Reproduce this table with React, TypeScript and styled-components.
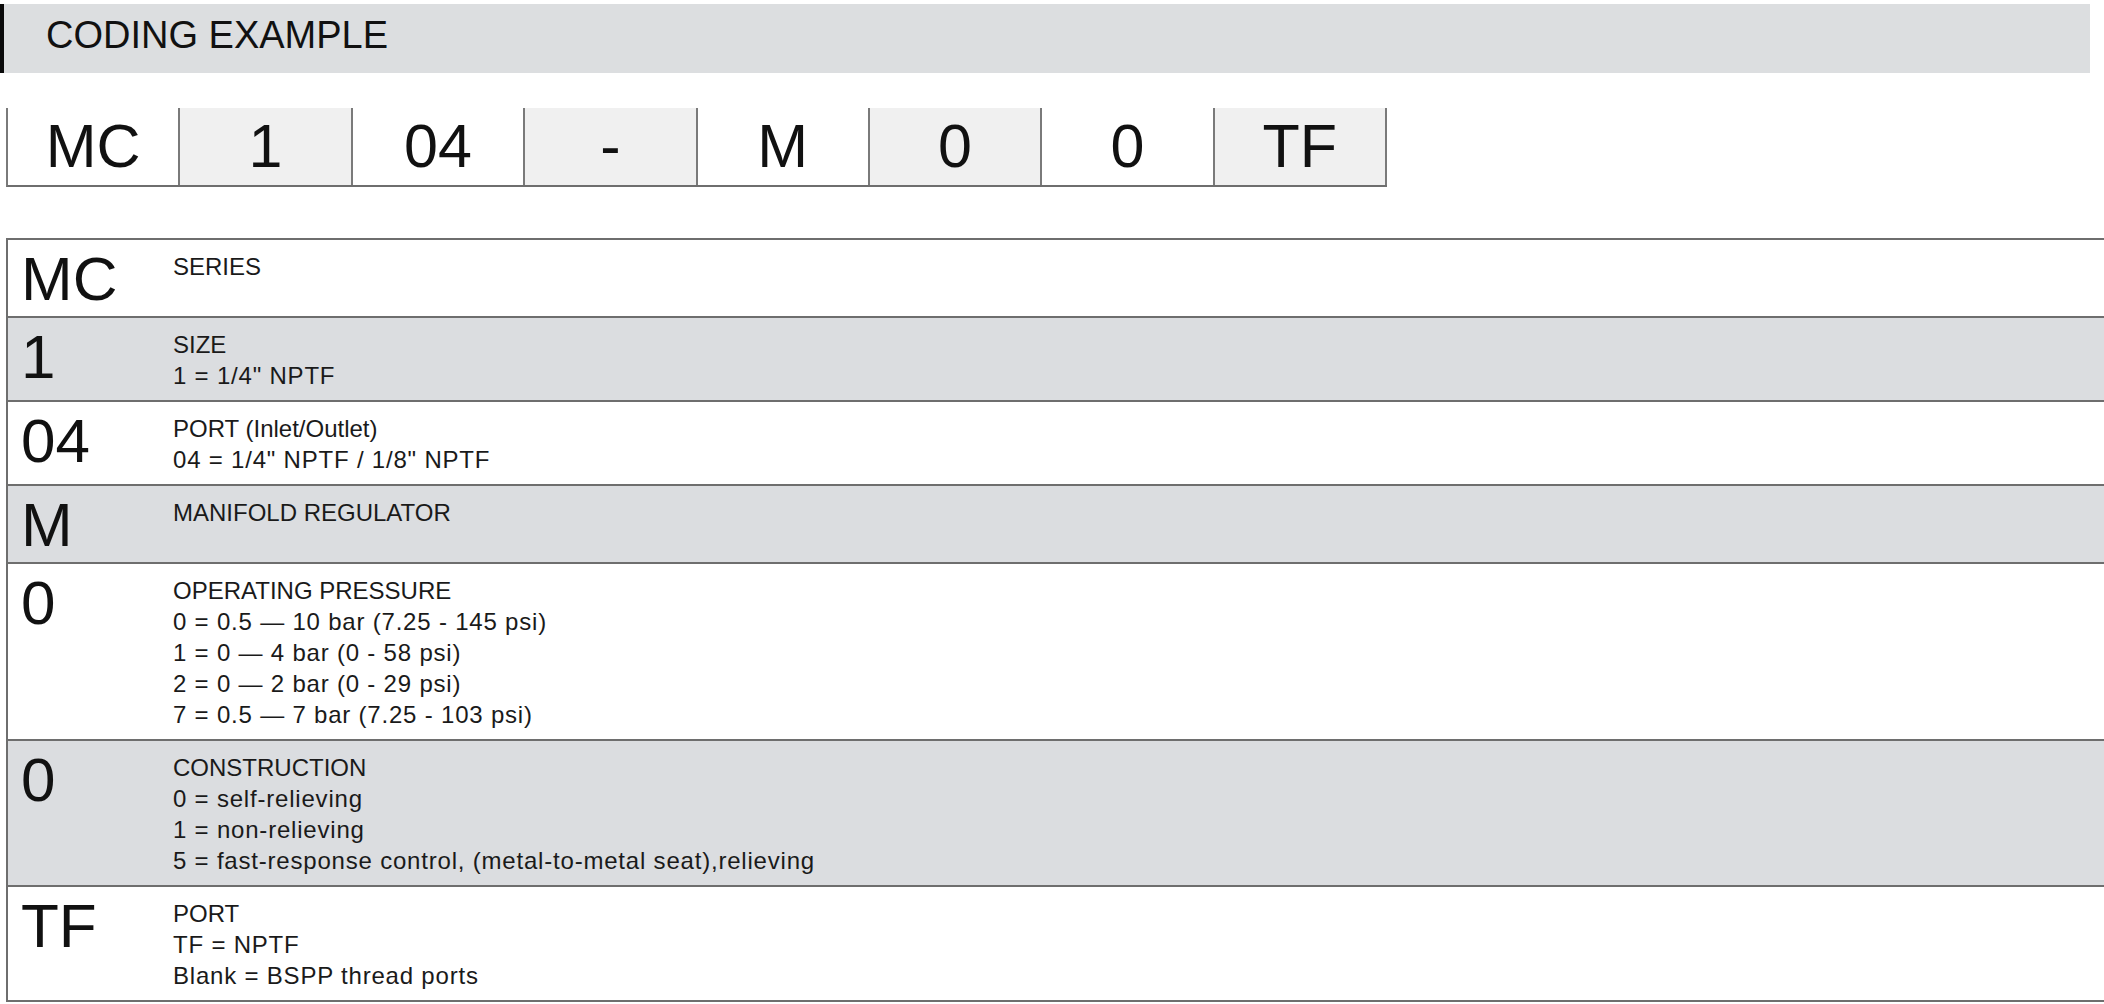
import React from "react";
import styled, { createGlobalStyle } from "styled-components";

const Global = createGlobalStyle`
  html, body {
    margin: 0;
    padding: 0;
    background: #ffffff;
    overflow: hidden;
  }
  body {
    font-family: "Liberation Sans", Arial, sans-serif;
    color: #141414;
  }
`;

const Page = styled.div`
  width: 2104px;
  height: 1004px;
  display: flex;
  flex-direction: column;
  overflow: hidden;
`;

const HeaderBand = styled.div`
  margin-top: 4px;
  margin-right: 14px;
  height: 69px;
  box-sizing: border-box;
  background: #dcdee0;
  border-left: 4px solid #0a0a0a;
  padding: 12px 0 0 42px;
  font-size: 38px;
  line-height: 38px;
  color: #111;
`;

const Strip = styled.div`
  margin: 35px 0 0 6px;
  width: 1381px;
  display: grid;
  grid-template-columns: repeat(8, 1fr);
  border-left: 2px solid #7a7a7a;
  border-bottom: 2px solid #6e6e6e;
  box-sizing: border-box;
`;

const StripBox = styled.div<{ $shade: boolean }>`
  height: 77px;
  display: flex;
  align-items: center;
  justify-content: center;
  background: ${(p) => (p.$shade ? "#f0f0f0" : "#ffffff")};
  border-right: 2px solid #7a7a7a;
  font-size: 61px;
  line-height: 61px;
  color: #111;
`;

const Table = styled.div`
  margin: 51px 0 0 6px;
  display: flex;
  flex-direction: column;
  border-left: 2px solid #6e6e6e;
  border-bottom: 2px solid #6e6e6e;
`;

const Row = styled.div<{ $shade: boolean }>`
  display: grid;
  grid-template-columns: 165px 1fr;
  align-items: start;
  border-top: 2px solid #6e6e6e;
  background: ${(p) => (p.$shade ? "#dbdde0" : "#ffffff")};
  padding: 11px 0 9px 0;
`;

const Code = styled.div`
  padding-left: 13px;
  font-size: 62px;
  line-height: 56px;
  color: #111;
`;

const Lines = styled.div`
  display: flex;
  flex-direction: column;
`;

const Line = styled.div<{ $value: boolean }>`
  font-size: 24px;
  line-height: 31px;
  letter-spacing: ${(p) => (p.$value ? "0.8px" : "0")};
  color: #1a1a1a;
  white-space: nowrap;
`;

const codes = ["MC", "1", "04", "-", "M", "0", "0", "TF"];

const rows: { code: string; lines: string[] }[] = [
  { code: "MC", lines: ["SERIES"] },
  { code: "1", lines: ["SIZE", '1 = 1/4" NPTF'] },
  { code: "04", lines: ["PORT (Inlet/Outlet)", '04 = 1/4" NPTF / 1/8" NPTF'] },
  { code: "M", lines: ["MANIFOLD REGULATOR"] },
  {
    code: "0",
    lines: [
      "OPERATING PRESSURE",
      "0 = 0.5 \u2014 10 bar (7.25 - 145 psi)",
      "1 = 0 \u2014 4 bar (0 - 58 psi)",
      "2 = 0 \u2014 2 bar (0 - 29 psi)",
      "7 = 0.5 \u2014 7 bar (7.25 - 103 psi)",
    ],
  },
  {
    code: "0",
    lines: [
      "CONSTRUCTION",
      "0 = self-relieving",
      "1 = non-relieving",
      "5 = fast-response control, (metal-to-metal seat),relieving",
    ],
  },
  { code: "TF", lines: ["PORT", "TF = NPTF", "Blank = BSPP thread ports"] },
];

export default function App() {
  return (
    <Page>
      <Global />
      <HeaderBand>CODING EXAMPLE</HeaderBand>
      <Strip>
        {codes.map((c, i) => (
          <StripBox key={i} $shade={i % 2 === 1}>
            {c}
          </StripBox>
        ))}
      </Strip>
      <Table>
        {rows.map((r, i) => (
          <Row key={i} $shade={i % 2 === 1}>
            <Code>{r.code}</Code>
            <Lines>
              {r.lines.map((l, j) => (
                <Line key={j} $value={j > 0}>
                  {l}
                </Line>
              ))}
            </Lines>
          </Row>
        ))}
      </Table>
    </Page>
  );
}
